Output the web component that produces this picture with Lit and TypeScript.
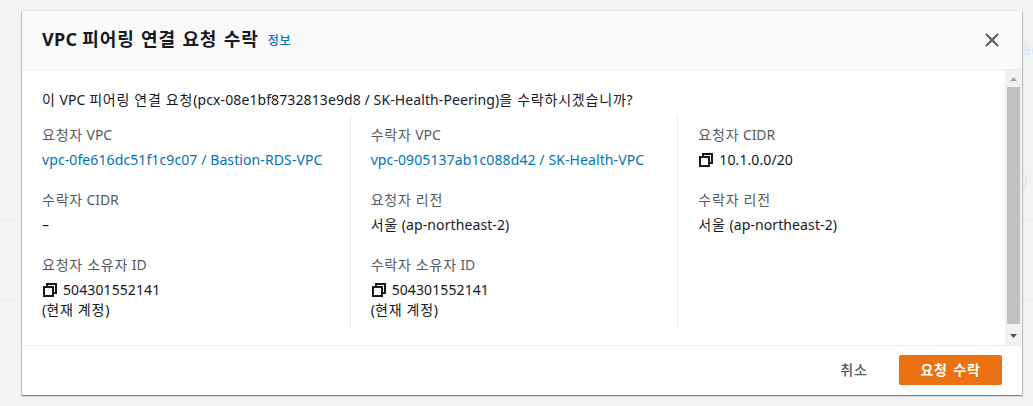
import { LitElement, html, css, svg, nothing } from "lit";
import { customElement, property } from "lit/decorators.js";

const HANGUL = /([\uac00-\ud7a3]+(?: +[\uac00-\ud7a3]+)*)/;

/** Splits a mixed string so Hangul and Latin runs can be spaced separately. */
const runs = (text: string) =>
  text
    .split(HANGUL)
    .filter((part) => part !== "")
    .map((part) => html`<span class=${HANGUL.test(part) ? "ko" : "la"}>${part}</span>`);

const textStyles = css`
  .ko {
    font-family: "Noto Sans CJK KR", sans-serif;
    line-height: 0;
    letter-spacing: 0.8px;
    word-spacing: 0.2px;
  }
  .la {
    white-space: pre;
  }
`;

interface Field {
  label: string;
  value: string;
  link?: boolean;
  copy?: boolean;
  note?: string;
}

const MESSAGE =
  "이 VPC 피어링 연결 요청(pcx-08e1bf8732813e9d8 / SK-Health-Peering)을 수락하시겠습니까?";

const COLUMNS: Field[][] = [
  [
    { label: "요청자 VPC", value: "vpc-0fe616dc51f1c9c07 / Bastion-RDS-VPC", link: true },
    { label: "수락자 CIDR", value: "–" },
    { label: "요청자 소유자 ID", value: "504301552141", copy: true, note: "(현재 계정)" },
  ],
  [
    { label: "수락자 VPC", value: "vpc-0905137ab1c088d42 / SK-Health-VPC", link: true },
    { label: "요청자 리전", value: "서울 (ap-northeast-2)" },
    { label: "수락자 소유자 ID", value: "504301552141", copy: true, note: "(현재 계정)" },
  ],
  [
    { label: "요청자 CIDR", value: "10.1.0.0/20", copy: true },
    { label: "수락자 리전", value: "서울 (ap-northeast-2)" },
  ],
];

@customElement("detail-field")
export class DetailField extends LitElement {
  @property({ attribute: false }) field!: Field;

  static styles = [
    textStyles,
    css`
      :host {
        display: block;
      }
      .label {
        color: #545b64;
        margin-bottom: 5px;
        letter-spacing: -0.1px;
      }
      .value {
        display: flex;
        align-items: center;
        white-space: nowrap;
      }
      .label,
      .value,
      .note {
        height: 20px;
        line-height: 20px;
      }
      .link {
        color: #0073bb;
        text-decoration: none;
      }
      .copy {
        width: 14px;
        height: 14px;
        margin: 0 6px 0 1px;
        flex: none;
      }
    `,
  ];

  render() {
    const { label, value, link, copy, note } = this.field;
    const icon = html`<svg class="copy" viewBox="0 0 14 14" fill="none" stroke="#16191f" stroke-width="2">
      ${svg`<path d="M1 4h9v9H1z" /><path d="M4 4V1h9v9H10" />`}
    </svg>`;
    return html`
      <div class="label">${runs(label)}</div>
      <div class="value">
        ${copy ? icon : nothing}
        ${link ? html`<a class="link">${runs(value)}</a>` : html`<div>${runs(value)}</div>`}
      </div>
      ${note ? html`<div class="note">${runs(note)}</div>` : nothing}
    `;
  }
}

@customElement("app-root")
export class AppRoot extends LitElement {
  static styles = [
    textStyles,
    css`
      :host {
        display: flex;
        position: relative;
        box-sizing: border-box;
        width: 100%;
        height: 406px;
        padding: 11px 11px 11px 22px;
        overflow: hidden;
        background: #f2f4f4;
        color: #16191f;
        font: 14px/20px "Noto Sans", "Noto Sans CJK KR", sans-serif;
        letter-spacing: 0.1px;
      }
      .backdrop {
        position: absolute;
        inset: 0;
      }
      .rule {
        position: absolute;
        left: 0;
        right: 0;
        height: 1px;
        background: #e9ecec;
      }
      .rule.upper {
        top: 220px;
      }
      .rule.lower {
        top: 299px;
      }
      .ghost {
        position: absolute;
        left: 1023px;
        top: 40px;
        color: #dde7ee;
      }
      .ghost.paren {
        top: 170px;
        color: #e3e5e6;
      }
      .dialog {
        position: relative;
        display: flex;
        flex-direction: column;
        width: 1000px;
        height: 384px;
        background: #fff;
        box-shadow: 0 1px 1px 0 rgba(0, 28, 36, 0.3), 1px 1px 1px 0 rgba(0, 28, 36, 0.15),
          -1px 1px 1px 0 rgba(0, 28, 36, 0.15), 0 0 0 1px #e9ebeb;
      }
      .header {
        display: flex;
        align-items: center;
        box-sizing: border-box;
        height: 59px;
        padding: 0 23px 0 20px;
        background: #fafafa;
        border-bottom: 1px solid #eaeded;
      }
      .title {
        margin: 0;
        padding-bottom: 3px;
        font-size: 18px;
        line-height: 22px;
        font-weight: 700;
      }
      .title .ko {
        letter-spacing: 0.9px;
        word-spacing: 1.4px;
      }
      .title .la {
        letter-spacing: 0.3px;
      }
      .info {
        margin-left: 9px;
        padding-top: 1px;
        font-size: 12px;
        font-weight: 500;
        color: #0073bb;
      }
      .close {
        width: 14px;
        height: 14px;
        margin-left: auto;
      }
      .body {
        display: flex;
        flex: 1;
        min-height: 0;
      }
      .content {
        flex: 1;
        padding-top: 20px;
      }
      .message {
        height: 20px;
        margin: 0 20px 5px;
        white-space: nowrap;
      }
      .columns {
        display: grid;
        grid-template-columns: repeat(3, 1fr);
        height: 215px;
      }
      .column {
        display: flex;
        flex-direction: column;
        gap: 20px;
        padding: 10px 20px;
      }
      .column + .column {
        border-left: 1px solid #eaeded;
      }
      .scrollbar {
        display: flex;
        flex-direction: column;
        align-items: center;
        width: 17px;
        background: #f1f1f1;
      }
      .arrow {
        width: 17px;
        height: 17px;
      }
      .thumb {
        width: 13px;
        height: 237px;
        margin-bottom: 4px;
        background: #c1c1c1;
      }
      .footer {
        display: flex;
        align-items: center;
        justify-content: flex-end;
        box-sizing: border-box;
        height: 50px;
        padding: 0 20px 2px;
        border-top: 1px solid #eaeded;
      }
      .button {
        height: 30px;
        padding: 0;
        border: 0;
        border-radius: 2px;
        background: none;
        font: inherit;
        font-weight: 700;
        color: #545b64;
      }
      .button .ko {
        word-spacing: 1.5px;
      }
      .cancel {
        width: 70px;
        margin-right: 10px;
        font-weight: 500;
      }
      .accept {
        width: 103px;
        background: #ec7211;
        color: #fff;
      }
    `,
  ];

  render() {
    return html`
      <div class="backdrop">
        <div class="rule upper"></div>
        <div class="rule lower"></div>
        <span class="ghost">8d</span>
        <span class="ghost paren">)</span>
      </div>
      <div class="dialog" role="dialog">
        <div class="header">
          <h2 class="title">${runs("VPC 피어링 연결 요청 수락")}</h2>
          <a class="info">${runs("정보")}</a>
          <svg class="close" viewBox="0 0 14 14" stroke="#545b64" stroke-width="2">
            <path d="M1 1l12 12M13 1L1 13" />
          </svg>
        </div>
        <div class="body">
          <div class="content">
            <p class="message">${runs(MESSAGE)}</p>
            <div class="columns">
              ${COLUMNS.map(
                (fields) => html`<div class="column">
                  ${fields.map((field) => html`<detail-field .field=${field}></detail-field>`)}
                </div>`
              )}
            </div>
          </div>
          <div class="scrollbar">
            <svg class="arrow" viewBox="0 0 17 17"><path d="M5 11h7L8.500 7z" fill="#a3a3a3" /></svg>
            <div class="thumb"></div>
            <svg class="arrow" viewBox="0 0 17 17"><path d="M5 6h7L8.500 10z" fill="#505050" /></svg>
          </div>
        </div>
        <div class="footer">
          <button class="button cancel">${runs("취소")}</button>
          <button class="button accept">${runs("요청 수락")}</button>
        </div>
      </div>
    `;
  }
}
